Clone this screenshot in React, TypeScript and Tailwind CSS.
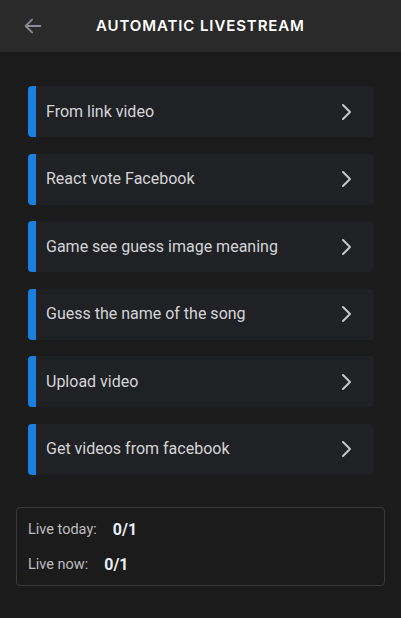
const ITEMS = [
  "From link video",
  "React vote Facebook",
  "Game see guess image meaning",
  "Guess the name of the song",
  "Upload video",
  "Get videos from facebook",
];

export default function App() {
  return (
    <div
      className="h-[618px] w-[401px] bg-[#1b1b1b] text-white"
      style={{ fontFamily: "Roboto, 'Noto Sans', sans-serif" }}
    >
      {/* Header */}
      <div className="flex h-[52px] items-center bg-[#2a2a2a] px-[22px]">
        <svg viewBox="0 0 24 24" className="h-[22px] w-[22px] text-[#8a8a96]" fill="none">
          <path
            d="M20 12H5m6-7l-7 7 7 7"
            stroke="currentColor"
            strokeWidth="2"
            strokeLinecap="round"
            strokeLinejoin="round"
          />
        </svg>
        <p
          className="ml-[52px] text-[15px] font-semibold uppercase tracking-[0.06em] text-white"
          style={{ fontFamily: "Inter, Roboto, sans-serif" }}
        >
          Automatic Livestream
        </p>
      </div>

      {/* Menu */}
      <div className="flex flex-col gap-[16.5px] px-[28px] pt-[34px] pr-[27px]">
        {ITEMS.map((t) => (
          <div key={t} className="flex h-[51px] items-center rounded-[4px] bg-[#202124]">
            <div className="h-full w-[8px] rounded-l-[4px] bg-[#1b7fe0]" />
            <span className="ml-[10px] flex-1 text-[16px] text-[#d4d4d8]">{t}</span>
            <svg viewBox="0 0 24 24" className="mr-[16px] h-[24px] w-[24px] text-[#c8c8cc]" fill="none">
              <path d="M9 5l7 7-7 7" stroke="currentColor" strokeWidth="2" strokeLinecap="round" strokeLinejoin="round" />
            </svg>
          </div>
        ))}
      </div>

      {/* Stats */}
      <div className="mx-[16px] mt-[32px] flex flex-col gap-[11px] rounded-[4px] border border-[#3a3a3c] px-[11px] pt-[10px] pb-[8px]">
        <div className="flex items-center text-[14.5px]">
          <span className="text-[#bdbdc0]">Live today:</span>
          <span className="ml-[16px] text-[16px] font-bold text-[#e8eef5]">0/1</span>
        </div>
        <div className="flex items-center text-[14.5px]">
          <span className="text-[#bdbdc0]">Live now:</span>
          <span className="ml-[16px] text-[16px] font-bold text-[#e8eef5]">0/1</span>
        </div>
      </div>
    </div>
  );
}
